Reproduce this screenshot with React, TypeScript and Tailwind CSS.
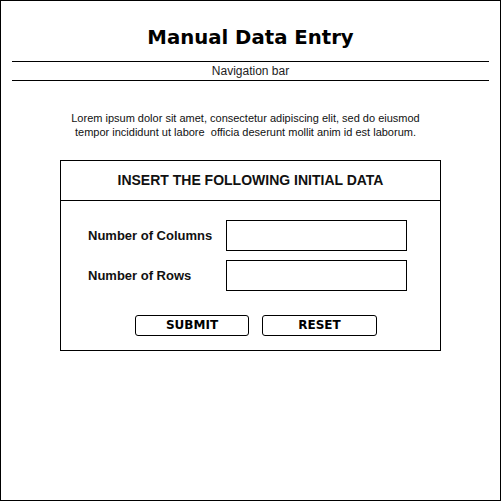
import React from "react";

export default function App() {
  const arial = { fontFamily: '"Liberation Sans", Arial, sans-serif' };
  return (
    <div className="w-[501px] h-[501px] border border-black bg-white box-border flex flex-col text-black">
      <div className="pt-[25px] leading-[24px] text-[19.7px] font-bold text-center font-['DejaVu_Sans',sans-serif]">
        Manual Data Entry
      </div>
      <div
        className="mt-[11px] mx-[11px] h-[20px] box-border border-y border-black flex items-center justify-center text-[12px] text-[#222]"
        style={arial}
      >
        Navigation bar
      </div>
      <div
        className="mt-[30px] pr-[10px] text-center text-[11px] leading-[14px] text-[#111]"
        style={arial}
      >
        Lorem ipsum dolor sit amet, consectetur adipiscing elit, sed do eiusmod
        <br />
        tempor incididunt ut labore&nbsp; officia deserunt mollit anim id est laborum.
      </div>
      <div className="mt-[21px] mx-auto w-[381px] h-[191px] box-border border border-black flex flex-col">
        <div
          className="h-[40px] box-border border-b border-black flex items-center justify-center text-[14px] font-bold text-[#111]"
          style={arial}
        >
          INSERT THE FOLLOWING INITIAL DATA
        </div>
        <div className="pt-[19px] pl-[27px] flex flex-col gap-[9px]" style={arial}>
          <div className="flex items-center">
            <div className="w-[138px] text-[13px] font-bold text-[#111]">Number of Columns</div>
            <div className="w-[181px] h-[31px] box-border border border-black" />
          </div>
          <div className="flex items-center">
            <div className="w-[138px] text-[13px] font-bold text-[#111]">Number of Rows</div>
            <div className="w-[181px] h-[31px] box-border border border-black" />
          </div>
        </div>
        <div className="mt-[24px] pl-[74px] flex gap-[13px] font-['DejaVu_Sans',sans-serif]">
          <div className="w-[114px] h-[21px] box-border border border-black rounded-[3px] flex items-center justify-center pb-[1px] text-[12px] font-bold">
            SUBMIT
          </div>
          <div className="w-[115px] h-[21px] box-border border border-black rounded-[3px] flex items-center justify-center pb-[1px] text-[12px] font-bold">
            RESET
          </div>
        </div>
      </div>
    </div>
  );
}
